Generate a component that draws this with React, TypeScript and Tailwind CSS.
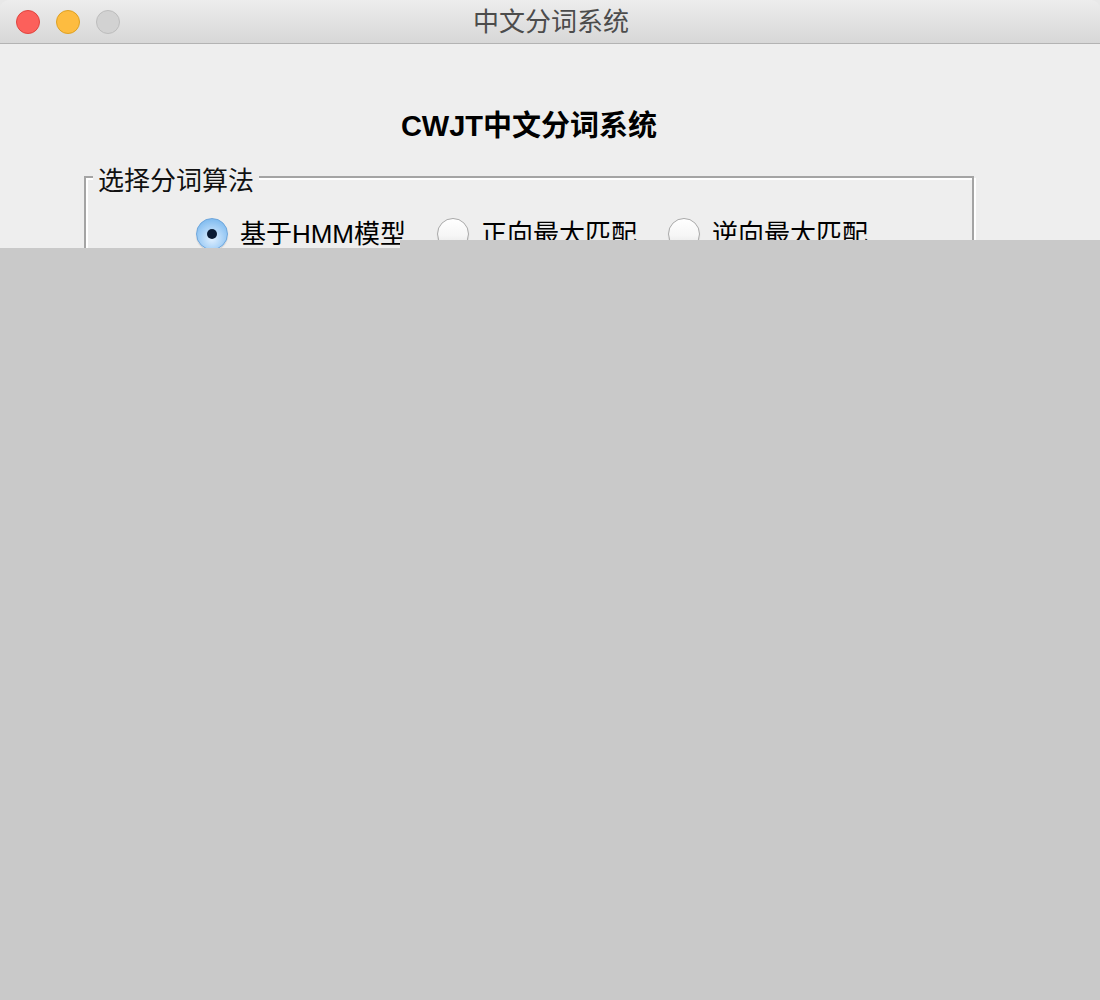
const font = {
  fontFamily: '"Liberation Sans", "Noto Sans CJK SC", sans-serif',
};

const Radio = ({ checked }: { checked?: boolean }) =>
  checked ? (
    <span className="flex h-[32px] w-[32px] shrink-0 items-center justify-center rounded-full border border-[#6ea6dc] bg-[radial-gradient(circle_at_50%_65%,#e2f1ff_0%,#a9d2f7_45%,#68aeea_100%)] shadow-[0_1px_1px_rgba(0,0,0,0.15)]">
      <span className="h-[10px] w-[10px] rounded-full bg-[#0b1b33]" />
    </span>
  ) : (
    <span className="h-[32px] w-[32px] shrink-0 rounded-full border border-[#a9a9a9] bg-[linear-gradient(#ffffff,#f6f6f6_55%,#e3e3e3)] shadow-[0_1px_1px_rgba(0,0,0,0.12)]" />
  );

const options = [
  { label: "基于HMM模型", checked: true },
  { label: "正向最大匹配", checked: false },
  { label: "逆向最大匹配", checked: false },
];

export default function App() {
  return (
    <div className="flex h-[1000px] w-[1100px] flex-col bg-[#e8e8e8]" style={font}>
      {/* title bar */}
      <div className="relative flex h-[44px] shrink-0 items-center rounded-t-[9px] border-b border-[#b3b3b3] bg-[linear-gradient(#ededed,#d7d7d7)]">
        <div className="flex items-center gap-[16px] pl-[16px]">
          <span className="h-[24px] w-[24px] rounded-full border border-[#e0443e] bg-[#fc605b]" />
          <span className="h-[24px] w-[24px] rounded-full border border-[#dea123] bg-[#fdbc40]" />
          <span className="h-[24px] w-[24px] rounded-full border border-[#bdbdbd] bg-[#d2d2d2]" />
        </div>
        <div className="absolute inset-0 flex items-center justify-center pl-[2px] text-[26px] leading-none text-[#4c4c4c]">
          中文分词系统
        </div>
      </div>

      {/* content */}
      <div className="relative h-[204px] shrink-0 overflow-hidden bg-[#eeeeee] pl-[84px] pr-[126px]">
        <h1 className="mt-[64px] text-center text-[29px] font-bold leading-[36px] text-black">
          CWJT中文分词系统
        </h1>
        <fieldset className="mt-[14px] border-2 border-[#a4a4a4] px-[7px] pt-[20px] shadow-[inset_2px_2px_0_#ffffff,2px_2px_0_#ffffff]">
          <legend className="bg-[#eeeeee] px-[5px] pt-[8px] text-[26px] leading-[30px] text-[#111]">
            选择分词算法
          </legend>
          <div className="flex items-center justify-center gap-[31px] pl-[6px]">
            {options.map((o) => (
              <label key={o.label} className="flex items-center gap-[12px]">
                <Radio checked={o.checked} />
                <span className="text-[26px] leading-[36px] text-black">{o.label}</span>
              </label>
            ))}
          </div>
          <div className="h-[40px]" />
        </fieldset>
        <div className="absolute left-[400px] right-0 top-[196px] h-[8px] bg-[#c9c9c9]" />
      </div>

      <div className="flex-1 bg-[#c9c9c9]" />
    </div>
  );
}
